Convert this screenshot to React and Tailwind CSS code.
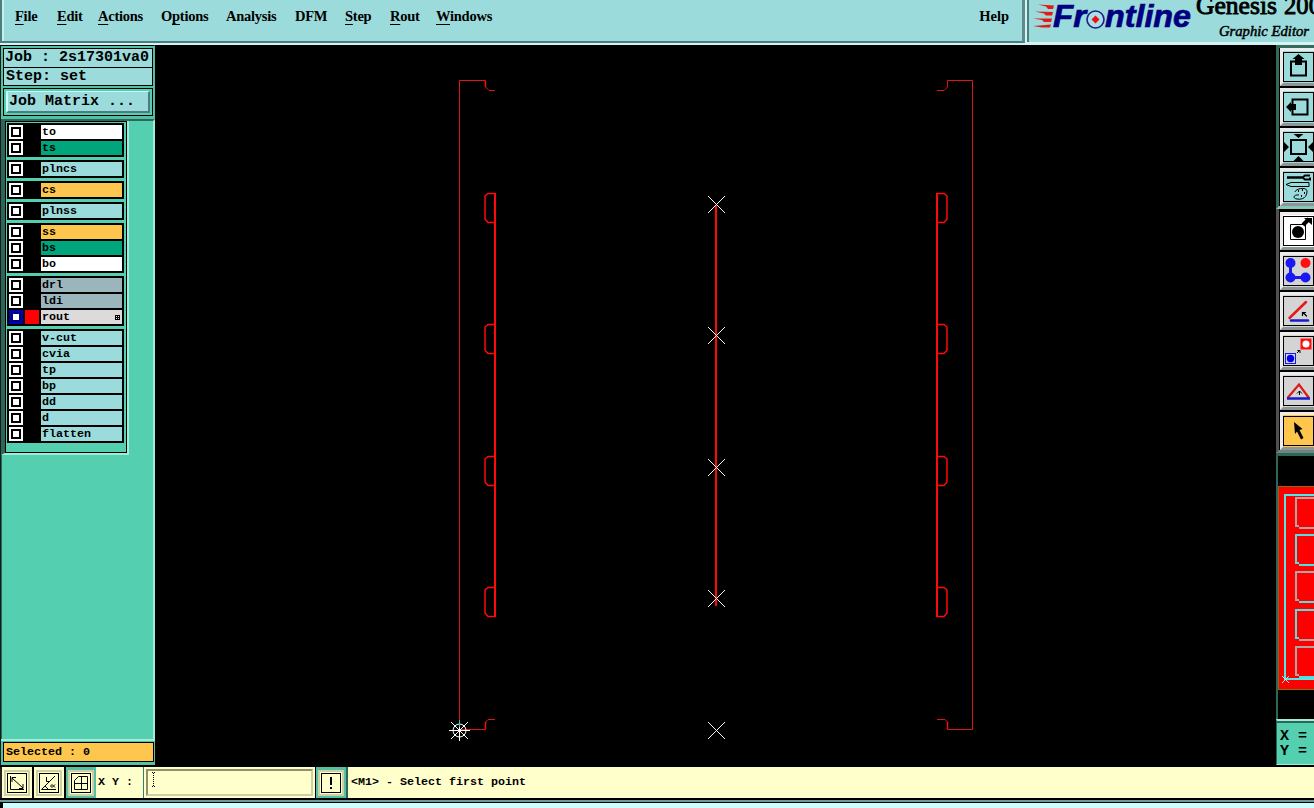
import React from 'react';

const menus = [
  { pre: '', key: 'F', post: 'ile', width: 'w-[42px]' },
  { pre: '', key: 'E', post: 'dit', width: 'w-[41px]' },
  { pre: '', key: 'A', post: 'ctions', width: 'w-[63px]' },
  { pre: 'O', key: 'p', post: 'tions', width: 'w-[65px]' },
  { pre: 'Analysis', key: '', post: '', width: 'w-[69px]' },
  { pre: 'DFM', key: '', post: '', width: 'w-[50px]' },
  { pre: '', key: 'S', post: 'tep', width: 'w-[45px]' },
  { pre: '', key: 'R', post: 'out', width: 'w-[46px]' },
  { pre: '', key: 'W', post: 'indows', width: 'w-[60px]' },
];

const layerGroups = [
  [{ name: 'to', color: 'bg-white' }, { name: 'ts', color: 'bg-[#00a57b]' }],
  [{ name: 'plncs', color: 'bg-[#9bdbdb]' }],
  [{ name: 'cs', color: 'bg-[#ffc64e]' }],
  [{ name: 'plnss', color: 'bg-[#9bdbdb]' }],
  [
    { name: 'ss', color: 'bg-[#ffc64e]' },
    { name: 'bs', color: 'bg-[#00a57b]' },
    { name: 'bo', color: 'bg-white' },
  ],
  [
    { name: 'drl', color: 'bg-[#9bb5bd]' },
    { name: 'ldi', color: 'bg-[#9bb5bd]' },
    { name: 'rout', color: 'bg-[#dcdada]', active: true },
  ],
  [
    { name: 'v-cut', color: 'bg-[#9bdbdb]' },
    { name: 'cvia', color: 'bg-[#9bdbdb]' },
    { name: 'tp', color: 'bg-[#9bdbdb]' },
    { name: 'bp', color: 'bg-[#9bdbdb]' },
    { name: 'dd', color: 'bg-[#9bdbdb]' },
    { name: 'd', color: 'bg-[#9bdbdb]' },
    { name: 'flatten', color: 'bg-[#9bdbdb]' },
  ],
];

function MenuBar() {
  return (
    <div className="flex h-[45px] shrink-0 bg-[#d4f4f4] font-['Liberation_Serif',serif] text-black">
      <div className="flex w-[1025px] h-[43px] border-l-2 border-r-[3px] border-b-2 border-l-[#4f7c7c] border-r-[#5d8b8b] border-b-[#4f7c84] bg-[#9bdbdb]">
        <div className="flex grow border-l-2 border-[#c0f0f0] pl-[11px] pt-[7px] text-[14.5px] leading-[18px] font-bold tracking-[-0.25px]">
          {menus.map((m) => (
            <div key={m.pre + m.key + m.post} className={`${m.width} shrink-0 whitespace-nowrap`}>
              {m.pre}
              <span className="underline underline-offset-[3px] decoration-1 [text-decoration-skip-ink:none]">{m.key}</span>
              {m.post}
            </div>
          ))}
          <div className="ml-auto mr-[13px] tracking-normal">Help</div>
        </div>
      </div>
      <Logo />
    </div>
  );
}

function Logo() {
  return (
    <div className="ml-[2px] w-[287px] h-[42px] border-l-2 border-[#4f7c7c] bg-[#9bdbdb]">
      <svg width="285" height="42" viewBox="1029 0 285 42" className="block">
        <g fill="#e81818">
          <path d="M1038 4.5 L1054 5.5 L1053 9 L1048 9 L1046 6.5 Z" />
          <path d="M1035 11.5 L1053 12 L1052 15.5 L1046 15.5 L1044 13.5 Z" />
          <path d="M1033 18.5 L1052 18.5 L1051 22 L1044 22 L1042 20 Z" />
          <path d="M1033 26 L1051 24.5 L1050 27.5 L1042 27.5 Z" />
        </g>
        <g
          fill="#000080"
          stroke="#000080"
          strokeWidth="0.7"
          fontFamily="'Liberation Sans', sans-serif"
          fontSize="31"
          fontWeight="bold"
          fontStyle="italic"
        >
          <text x="1053" y="27" textLength="33" lengthAdjust="spacingAndGlyphs">Fr</text>
          <text x="1105" y="27" textLength="86" lengthAdjust="spacingAndGlyphs">ntline</text>
        </g>
        <circle cx="1095.5" cy="19.5" r="8.5" fill="#a8dfe8" stroke="#202080" strokeWidth="1.6" />
        <path d="M1095.5 15.5 L1099.5 19.5 L1095.5 23.5 L1091.5 19.5 Z" fill="#f01010" />
        <g fontFamily="'Liberation Serif', serif" fill="#000" stroke="#000">
          <text x="1196" y="14" fontSize="25" strokeWidth="0.9" textLength="81" lengthAdjust="spacingAndGlyphs">Genesis</text>
          <text x="1284" y="14" fontSize="25" strokeWidth="0.9" textLength="37" lengthAdjust="spacingAndGlyphs">200</text>
          <text x="1219" y="36" fontSize="15" strokeWidth="0.5" fontStyle="italic" textLength="90" lengthAdjust="spacingAndGlyphs">Graphic Editor</text>
        </g>
      </svg>
    </div>
  );
}

function LayerRow({ layer }) {
  return (
    <div className="flex h-[14px] gap-[2px]">
      <div className={`flex h-[14px] w-[14px] items-center justify-center ${layer.active ? 'bg-[#0000b0]' : 'bg-white'}`}>
        <div className={`h-[10px] w-[10px] border-2 bg-white ${layer.active ? 'border-[#000080]' : 'border-black'}`} />
      </div>
      <div className={`w-[14px] ${layer.active ? 'bg-[#ff0000]' : 'bg-black'}`} />
      <div className={`flex grow items-center pl-px ${layer.color}`}>
        <span className="text-[11.67px] leading-[14px]">{layer.name}</span>
        {layer.active && (
          <svg width="5" height="5" viewBox="0 0 5 5" className="ml-auto mr-[2px]" shapeRendering="crispEdges">
            <path d="M0 0.5H5M0 2.5H5M0 4.5H5M0.5 0V5M2.5 0V5M4.5 0V5" stroke="#000" />
          </svg>
        )}
      </div>
    </div>
  );
}

function LeftPanel() {
  return (
    <div className="flex w-[155px] shrink-0 flex-col border-l border-[#101c18] bg-[#54d0b0] font-['Liberation_Mono',monospace] font-bold text-black">
      <div className="h-[74px] border-t border-black border-r border-r-[#54b99d] bg-[#54c0a4] pl-[2px] pr-px pt-[2px]">
        <div className="h-[20px] border border-black bg-[#9bdbdb] pl-px text-[15px] leading-[18px] whitespace-nowrap">Job : 2s17301va0</div>
        <div className="h-[18px] border border-t-0 border-black bg-[#9bdbdb] pl-[2px] text-[15px] leading-[17px]">Step: set</div>
        <div className="mt-[2px] h-[28px] border border-black bg-[#54d0b0] p-[2px]">
          <div className="h-[22px] border-t border-l-2 border-b-2 border-r-2 border-t-[#c8ffff] border-l-[#c8ffff] border-b-[#4f7c84] border-r-[#4f7c84] bg-[#9bdbdb] pl-px text-[15px] leading-[20px]">
            Job Matrix ...
          </div>
        </div>
      </div>

      <div className="flex grow flex-col border-t-2 border-r-2 border-b-2 border-t-[#2d6557] border-r-[#a0ecd8] border-b-[#a0ecd8]">
        <div className="h-[334px] w-[128px] border-l-4 border-t-0 border-r-2 border-b-2 border-l-[#306458] border-r-[#a0ecd8] border-b-[#a0ecd8]">
          <div className="flex h-[332px] flex-col gap-[3px] border border-black pt-px pl-px pr-[2px]">
            {layerGroups.map((group, i) => (
              <div key={i} className="flex flex-col gap-[2px] bg-black p-[2px]">
                {group.map((layer) => (
                  <LayerRow key={layer.name} layer={layer} />
                ))}
              </div>
            ))}
          </div>
        </div>
        <div className="grow border-l border-[#2d6557]" />
      </div>

      <div className="h-[24px] bg-[#54c0a4] pt-px pl-[2px] pr-px">
        <div className="h-[20px] border border-black bg-[#ffc64e] pl-[2px] text-[11.67px] leading-[18px]">Selected : 0</div>
      </div>
      <div className="h-px bg-black" />
    </div>
  );
}

function Cross({ x, y }) {
  return <path d={`M${x - 8} ${y - 8}L${x + 9} ${y + 9}M${x - 8} ${y + 9}L${x + 9} ${y - 8}`} stroke="#f4f4f4" strokeWidth="1" />;
}

function Canvas() {
  return (
    <svg width="1121" height="721" viewBox="155 45 1121 721" className="block shrink-0 bg-black" fill="none">
      {/* outer rails */}
      <g stroke="#dc1616">
        <path d="M495 90.5H489L485.5 87V80.5H459.5V729.5H485.5V722L488 719.5H495" />
        <path d="M937 90.5H944L947.5 87V80.5H972.5V729.5H947.5V722L945 719.5H937" />
      </g>
      <g stroke="#ff0a0a">
        <path d="M485.5 81V87M485.5 729V722M947.5 729V722" strokeWidth="1.5" />
        <path d="M495 193V617M937 193V617M716 205V606" strokeWidth="2" />
        {[193, 324, 456, 587].map((y) => (
          <g key={y} strokeWidth="1.5">
            <path d={`M495 ${y + 0.5}H488L485 ${y + 3}V${y + 26}L488 ${y + 29.5}H495`} />
            <path d={`M937 ${y + 0.5}H944L947 ${y + 3}V${y + 26}L944 ${y + 29.5}H937`} />
          </g>
        ))}
      </g>
      {[204, 335, 467, 598, 730].map((y) => (
        <Cross key={y} x={716} y={y} />
      ))}
      {/* datum */}
      <g stroke="#fff">
        <circle cx="459.5" cy="730.5" r="6.5" />
        <path d="M449 730.5H470M459.5 720V741M451 722L468 739M451 739L468 722" />
        <path d="M459.5 720V727" stroke="#30c8c8" />
      </g>
    </svg>
  );
}

const viewTools = [
  <g key="up">
    <path d="M8 9.5H23V23.5H8Z" fill="none" stroke="#000" strokeWidth="2" />
    <path d="M15.5 2L21.5 7H19V13H12V7H9.5Z" />
  </g>,
  <g key="left">
    <path d="M9.5 7.5H24.5V22.5H9.5Z" fill="none" stroke="#000" strokeWidth="2" />
    <path d="M3 15L8 10V12H13V18H8V20Z" />
  </g>,
  <g key="fit">
    <path d="M8 8H23V22H8Z" fill="none" stroke="#000" strokeWidth="2" />
    <path d="M10.5 2H20.5L15.5 6ZM10.5 29H20.5L15.5 24ZM1 10L6 15L1 20ZM30 10L25 15L30 20Z" />
  </g>,
  <g key="tools" fill="none" stroke="#000">
    <path d="M4 5.5H19" strokeWidth="2.5" />
    <path d="M27 3.5H22L19.5 5.5L22 7.5H27V5.5" strokeWidth="2" />
    <path d="M3 12.5L8 10.5H26V14.5H8Z" />
    <path d="M12 20C13 16 24 15 24 19C24 25 20 28 14 27C8 26 12 22 16 23" />
    <path d="M15 19H16M19 18H20M21 21H22M18 24H19" strokeWidth="2" />
  </g>,
];

const editTools = [
  {
    face: 'bg-white',
    icon: (
      <g>
        <path d="M7.5 8.5H22.5V23.5H7.5Z" fill="none" stroke="#000" />
        <circle cx="15" cy="16" r="6" />
        <path d="M20 9L26 3" stroke="#000" strokeWidth="4" />
        <path d="M21 2H29V9Z" />
      </g>
    ),
  },
  {
    face: 'bg-[#d4d4d4]',
    icon: (
      <g fill="#1a1af0">
        <path d="M7.5 7V21.5H22" fill="none" stroke="#1a1af0" strokeWidth="3" />
        <circle cx="7.5" cy="7" r="5" />
        <circle cx="7.5" cy="21.5" r="5" />
        <circle cx="22.5" cy="21.5" r="5" />
        <circle cx="22.5" cy="7" r="5" fill="#ff1010" />
      </g>
    ),
  },
  {
    face: 'bg-[#d4d4d4]',
    icon: (
      <g fill="none" strokeLinecap="round">
        <path d="M6.5 22L23 6" stroke="#e81818" strokeWidth="2.5" />
        <path d="M8 24.5H25" stroke="#1a1ad0" strokeWidth="2.5" />
        <path d="M23.5 20L20 16.5M19.5 19.5V16.5H22.5" stroke="#000" strokeWidth="1.2" />
      </g>
    ),
  },
  {
    face: 'bg-[#d4d4d4]',
    icon: (
      <g fill="none">
        <rect x="17.5" y="2.5" width="11" height="11" fill="#ff1010" />
        <circle cx="23" cy="8" r="3.5" fill="#fff" />
        <rect x="2.5" y="17.5" width="10" height="10" stroke="#1a1ae0" />
        <circle cx="7.5" cy="22.5" r="3.7" fill="#0000f0" />
        <path d="M14 17L17 14M14.5 14.5H17V17" stroke="#000" />
      </g>
    ),
  },
  {
    face: 'bg-[#d4d4d4]',
    icon: (
      <g fill="none">
        <path d="M4.5 22L16 8.5L26 22" stroke="#e01818" strokeWidth="2.2" />
        <path d="M4 22.5H27" stroke="#1a1ad0" strokeWidth="2.5" />
        <path d="M16.5 19V15M14 17.5L16.5 15L19 17.5" stroke="#000" />
      </g>
    ),
  },
  {
    face: 'bg-[#ffc64e]',
    icon: <path d="M11 6L19.5 13L16.5 14L20.5 22L18 23.5L14 15.5L12 18Z" />,
  },
];

function ToolButton({ face, children }) {
  return (
    <div className={`h-[38px] w-[38px] shrink-0 border-[3px] border-t-[#ececec] border-l-[#ececec] border-b-[#8f9696] border-r-[#8f9696] pt-px ${face}`}>
      <div className="h-[30px] w-[31px] border border-black">
        <svg width="29" height="28" viewBox="1 1 29 28" className="block">{children}</svg>
      </div>
    </div>
  );
}

function RightPanel() {
  return (
    <div className="flex w-[38px] shrink-0 flex-col overflow-hidden bg-black">
      <div className="flex h-[164px] flex-col gap-[2px] border-l-[3px] border-t-[3px] border-b-[3px] border-l-[#35695b] border-t-[#35695b] border-b-[#85c8b8] pl-px">
        {viewTools.map((icon) => (
          <ToolButton key={icon.key} face="bg-[#9bdbdb]">{icon}</ToolButton>
        ))}
      </div>
      <div className="flex h-[244px] flex-col gap-[2px] border-l-[3px] border-b-[3px] border-l-[#555050] border-b-[#6c8580] pl-px pt-[3px]">
        {editTools.map((tool, i) => (
          <ToolButton key={i} face={tool.face}>{tool.icon}</ToolButton>
        ))}
      </div>

      {/* panel overview */}
      <div className="h-[266px] border-l-2 border-t-[3px] border-[#2d6557] bg-black">
        <svg width="36" height="263" viewBox="1278 456 36 263" className="block">
          <rect x="1278.5" y="486.5" width="40" height="203" fill="#ff0000" stroke="#8a6a10" />
          <path d="M1316 495H1285V679H1316" fill="none" stroke="#50e8e8" strokeWidth="2" />
          {[498, 535, 572, 610, 647].map((y, i) => (
            <g key={y} fill="none" strokeWidth="2">
              <path d={`M1316 ${y}H1296V${y + 28}H1299`} stroke={i % 2 ? '#50e0e0' : '#a8a8a8'} />
              <path d={`M1299 ${y + 30}H1316`} stroke={i === 0 || i === 3 ? '#a8a8a8' : '#50e0e0'} />
            </g>
          ))}
          <path d="M1282 676L1289 683M1282 683L1289 676" stroke="#c0e8e8" />
        </svg>
      </div>
      <div className="h-[46px] border-l border-t-2 border-b border-l-[#2d6557] border-t-[#a0ecd8] border-b-[#a0ecd8] bg-[#54d0b0] font-['Liberation_Mono',monospace] text-[15px] leading-[15px] font-bold">
        <div className="border-t-2 border-[#2d6557] pl-[3px] pt-[6px] whitespace-pre">
          <div>X =</div>
          <div>Y =</div>
        </div>
      </div>
      <div className="grow bg-black" />
    </div>
  );
}

function StatusButton({ face, ring, children }) {
  return (
    <div className={`flex h-[31px] w-[30px] shrink-0 items-center justify-center ${face}`}>
      <div className={`flex h-[26px] w-[26px] items-center justify-center border-2 bg-[#ffffcc] ${ring}`}>
        <svg width="20" height="20" viewBox="0 0 20 20" className="block shrink-0" fill="none" stroke="#000">
          <rect x="0.5" y="0.5" width="19" height="19" />
          {children}
        </svg>
      </div>
    </div>
  );
}

function StatusBar() {
  return (
    <div className="flex h-[34px] shrink-0 border-t border-b-2 border-black bg-[#ffffcc] font-['Liberation_Mono',monospace] text-[11.67px] font-bold text-black">
      <div className="flex shrink-0 gap-[2px] border-l-2 border-[#222] bg-black">
        <StatusButton face="bg-[#ffffcc]" ring="border-[#cfcfa5]">
          <path d="M3.5 3V16.5H17M5 5L16 15M5 9V4.5H9M16 11V15.5H12" />
        </StatusButton>
        <StatusButton face="bg-[#ffffcc]" ring="border-[#cfcfa5]">
          <path d="M2.5 16.5L16 3M2.5 16.5H17M7.5 4V8.5H10M6 13L9 16M16 11.5L13 14.5L11.5 13L13 11.5L16 14.5" />
        </StatusButton>
        <StatusButton face="bg-[#54c0a4]" ring="border-[#cfcfa5]">
          <path d="M3.5 16.5V7.5L7.5 3.5H16.5V16.5ZM10.5 3.5V16.5M3.5 10.5H16.5" />
        </StatusButton>
      </div>
      <div className="w-[47px] shrink-0 pl-[2px] leading-[30px] whitespace-nowrap">X Y :</div>
      <div className="w-[173px] shrink-0 border-l border-r border-l-[#2d8070] border-r-black p-[2px]">
        <div className="h-[27px] border-2 border-t-[#90906c] border-l-[#90906c] border-b-[#cfcfa5] border-r-[#cfcfa5] pl-[3px] pt-px">
          <svg width="5" height="15" viewBox="0 0 5 15" className="block" stroke="#000" fill="none">
            <path d="M2.5 1V14" strokeDasharray="1 1" />
            <path d="M1 0.5H2M3 0.5H4M1 14.5H2M3 14.5H4" />
          </svg>
        </div>
      </div>
      <StatusButton face="bg-[#54c0a4]" ring="border-[#cfcfa5]">
        <path d="M10 4V12M10 14V16" strokeWidth="2" />
      </StatusButton>
      <div className="grow border-l-2 border-[#2d6557] pl-[3px] leading-[30px]">{'<M1> - Select first point'}</div>
    </div>
  );
}

function App() {
  return (
    <div className="flex h-[808px] w-[1314px] flex-col overflow-hidden bg-black">
      <MenuBar />
      <div className="flex h-[721px] shrink-0">
        <LeftPanel />
        <Canvas />
        <RightPanel />
      </div>
      <StatusBar />
      <div className="h-[2px] shrink-0 bg-[#6a9a9a]" />
      <div className="ml-[2px] h-[6px] shrink-0 border-t border-l border-black bg-[#ccffff]" />
    </div>
  );
}

export default App;
